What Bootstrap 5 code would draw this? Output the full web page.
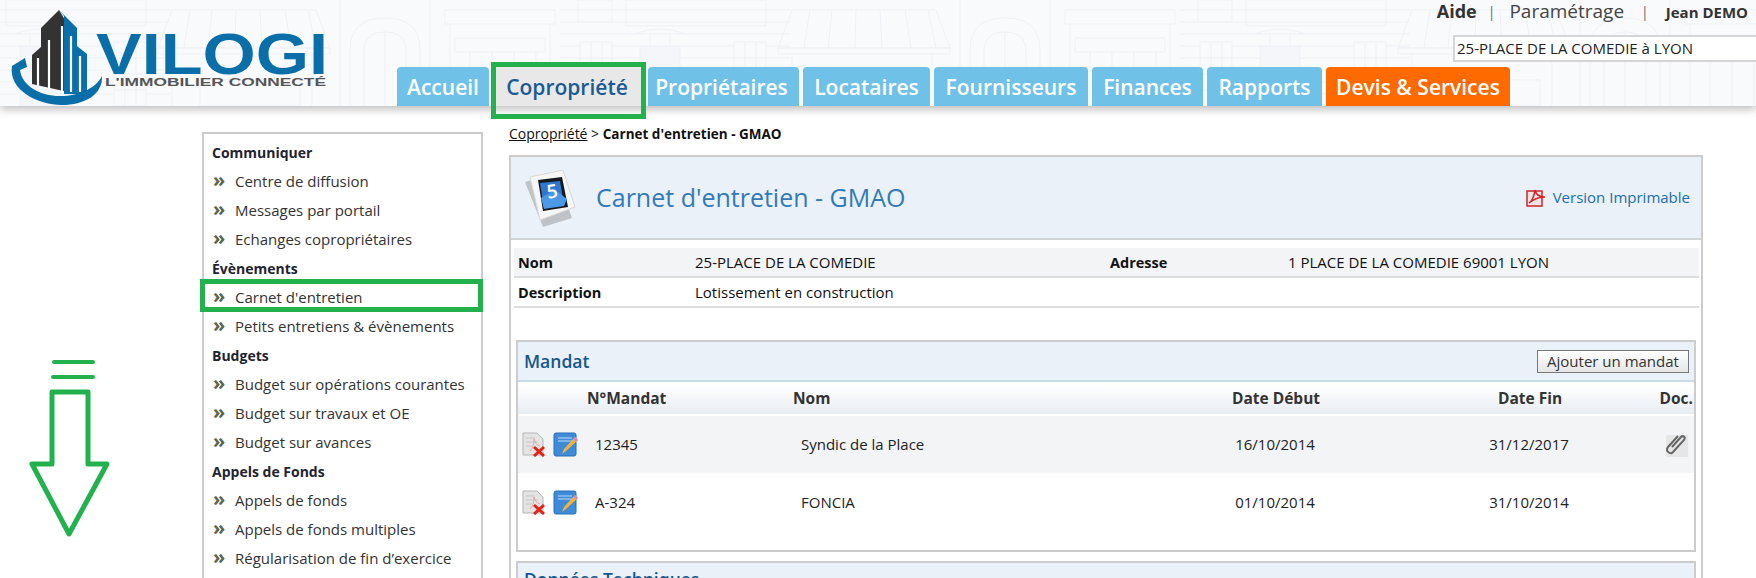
<!DOCTYPE html>
<html lang="fr">
<head>
<meta charset="utf-8">
<title>Carnet d'entretien - GMAO</title>
<link href="https://cdn.jsdelivr.net/npm/bootstrap@5.3.0/dist/css/bootstrap.min.css" rel="stylesheet">
<style>
html,body{height:578px;overflow:hidden;background:#fff}
body{font-family:"Open Sans","Noto Sans",sans-serif;font-size:15px;color:#222}
.vg-top{height:106px;background:#f9fafc;box-shadow:0 3px 9px rgba(0,0,0,.28);position:relative;z-index:2}
.vg-facade{position:absolute;inset:0;width:100%;height:100%}
.vg-logo{width:397px;height:106px;flex:0 0 397px;position:relative}
.vg-right{position:relative;min-width:0}
.vg-util{height:67px}
.vg-links{height:35px;color:#444;font-size:18px;line-height:23px;padding-right:8px}
.vg-links b{color:#333}
.vg-links .vg-sep{font-size:14px;color:#666}
.vg-para{font-size:19px;margin:0 17px 0 14px}
.vg-gap1{margin-left:11px}
.vg-user{font-size:15px;font-weight:700;color:#333;position:relative;top:1px;margin-left:17px}
.vg-select{width:310px;height:27px;margin-right:-7px;margin-left:auto;background:#fff;border:2px solid #d6d6d6;padding:0 2px;line-height:22px;font-size:15px;color:#222}
.vg-tabs{gap:4px;height:39px;flex-wrap:nowrap}
.vg-tabs .nav-link{height:39px;background:#70c1e8;color:#fff;font-size:21px;font-weight:600;line-height:41px;padding:0;text-align:center;border-radius:4px 4px 0 0;white-space:nowrap}
.vg-tabs .vg-w1{width:92px}.vg-tabs .vg-w2{width:151px;padding-right:3px}.vg-tabs .vg-w3{width:151px;padding-right:4px}.vg-tabs .vg-w4{width:127px}
.vg-tabs .vg-w5{width:154px}.vg-tabs .vg-w6{width:111px}.vg-tabs .vg-w7{width:115px}.vg-tabs .vg-w8{width:184px}
.vg-tabs .nav-link.active{background:#e8e8e8;color:#1b5a92;position:relative}
.vg-tabs .nav-link.active::after{content:"";position:absolute;left:-2px;right:-2px;top:-5px;bottom:-13px;border:5px solid #22b14c;pointer-events:none}
.vg-tabs .nav-link.vg-orange{background:#ff6a00}
.vg-page{padding-left:202px;gap:26px}
.vg-side{width:281px;flex:0 0 281px;height:460px;margin-top:26px;border:2px solid #ccc;border-bottom:0;padding:4px 8px 0 8px;background:#fff}
.vg-side h6{font-size:14px;font-weight:700;line-height:29px;height:29px;margin:0;color:#1f2430}
.vg-side ul{margin:0}
.vg-side li{height:29px;line-height:29px;position:relative;color:#333;white-space:nowrap;display:flex;align-items:center;padding-left:2px}
.vg-side li i{font-style:normal;font-weight:700;font-size:20px;color:#59654d;width:21px;flex:0 0 21px;position:relative;top:-2px;left:-1px}
.vg-marked::after{content:"";position:absolute;left:-12px;right:-10px;top:-4px;bottom:0;border:5px solid #22b14c;pointer-events:none}
.vg-main{width:1194px;flex:0 0 1194px;margin-top:18px}
.vg-crumb{height:31px;line-height:20px;font-size:14px;color:#111}
.vg-crumb a{color:#111}
.vg-crumb b{font-size:13.5px}
.vg-panel{border:2px solid #ccc;border-bottom:0;height:460px}
.vg-head{height:83px;background:#eaf1f8;border-bottom:2px solid #d2d5d8;padding-left:9px;padding-right:11px}
.vg-head h1{font-size:25px;font-weight:400;color:#337ab7;margin:0 0 0 11px;line-height:1;position:relative;top:0}
.vg-print{color:#1a6fa8;font-size:15px;text-decoration:none;gap:7px}
.vg-body{padding:8px 2px 0 3px}
.vg-info{table-layout:fixed;margin-bottom:32px;width:1185px}
.vg-info td,.vg-info th{padding:0 0 0 4px;height:29px;vertical-align:middle;border-bottom:2px solid #ddd;background:transparent;box-shadow:none;font-size:15px;color:#111}
.vg-info th{font-weight:700;font-size:14.5px;padding-top:1px}
.vg-info tr.vg-odd td,.vg-info tr.vg-odd th{background:#f3f4f6}
.vg-info tr.vg-even td,.vg-info tr.vg-even th{height:30px}
.vg-c1{width:177px}.vg-c2{width:415px}.vg-c3{width:178px}
.vg-sub{width:1180px;margin-left:2px;border:2px solid #ccc;margin-bottom:9px}
.vg-subhead{height:40px;background:#eaf1f8;border-bottom:2px solid #c9dde9;padding:0 5px 0 6px}
.vg-subhead h2{font-size:17.5px;font-weight:600;color:#15568f;margin:0}
.vg-cuthead{padding-bottom:6px}
.vg-add{height:23px;width:152px;padding:0;font-size:15px;line-height:20px;color:#333;background:linear-gradient(#fff,#e6e6e6);border:1px solid #777;border-radius:0}
.vg-grid{table-layout:fixed;margin:0;width:1176px}
.vg-grid th{height:33px;padding:1px 0 0;font-size:15.5px;font-weight:700;color:#333;vertical-align:middle;background:linear-gradient(#fff 0,#fff 10%,#e7ecf2 100%);border-bottom:2px solid #fff;box-shadow:none;line-height:1}
.vg-grid thead{border-bottom:2px solid #d3e0ea}
.vg-grid td{height:58px;padding:0;vertical-align:middle;font-size:15px;color:#222;border:0;background:transparent;box-shadow:none}
.vg-grid tr.vg-odd td{background:#f3f4f6}
.vg-g1{width:69px}.vg-g2{width:206px}.vg-g3{width:307px}.vg-g4{width:352px}.vg-g5{width:156px}
.vg-pad{padding-left:8px!important}
.vg-tools{padding-left:4px!important}
.vg-tools svg{display:inline-block;vertical-align:middle}
.vg-tools svg+svg{margin-left:7px}
.vg-gridfoot{height:19px}
.vg-rdoc{text-align:right;padding-right:1px!important}
.vg-rclip{text-align:right;padding-right:6px!important}
.vg-mid{text-align:center}
.vg-dates{padding-right:2px!important}
.vg-arrow{position:absolute;left:28px;top:358px;z-index:3;pointer-events:none}
</style>
</head>
<body>
<header class="vg-top d-flex">
  <svg class="vg-facade" viewBox="0 0 1756 106" preserveAspectRatio="none" aria-hidden="true">
    <defs>
      <pattern id="vgFacade" x="-60" y="0" width="620" height="106" patternUnits="userSpaceOnUse">
        <g fill="none" stroke="#eff1f6" stroke-width="1">
          <path d="M0 10H230M0 22H230M0 34H230M0 46H230M0 58H230M0 70H230M0 82H230M0 94H230"/>
          <path d="M18 0h34v22H18zM66 0h140v26H66z"/>
          <rect x="20" y="42" width="32" height="64" fill="#f9fafc"/><path d="M31 42v64M42 42v64M20 58h32M20 74h32M20 90h32"/>
          <rect x="80" y="46" width="40" height="60" fill="#f4f6f9"/><path d="M74 34q26-10 52 0M90 34v12M110 34v12"/>
          <rect x="174" y="42" width="32" height="64" fill="#f9fafc"/><path d="M185 42v64M196 42v64M174 58h32M174 74h32M174 90h32"/>
          <path d="M232 10l-14 38h172l-14-38zM250 10l-6 38M272 10l-4 38M296 10l-1 38M320 10l2 38M345 10l6 38M368 10l8 38"/>
          <path d="M218 48h172v6H218zM232 54v52M372 54v52M260 80h100v26H260z"/>
          <path d="M410 106V50q0-32 35-32t35 32v56M424 106V52q0-20 21-20t21 20v54M445 32v74M400 0v106M490 0v106"/>
          <path d="M505 10h110v14H505zM510 24v82M610 24v82M515 38h90v14h-90zM530 52v54M552 52v54M574 52v54M596 52v54"/>
        </g>
      </pattern>
    </defs>
    <rect width="1756" height="106" fill="url(#vgFacade)"/>
  </svg>
  <div class="vg-logo">
    <svg width="397" height="106" viewBox="0 0 397 106" role="img" aria-label="Vilogi">
      <path d="M25 58L12 66C8 90 38 105 62 105C84 105 103 95 102 76C96 88 80 96 60 96C40 96 22 86 20 70L27 67Z" fill="#0a6fa9"/>
      <path d="M59 10L41 28V47L32 55V84L68 92V25Z" fill="#333"/>
      <path d="M59 10L77 28V46L87 54V94L64 94V16Z" fill="#0a6fa9"/>
      <path d="M38 58V86M49 40V90M62 26V92M71 36V92M80 56V92" stroke="#fff" stroke-width="2.2" fill="none"/>
      <text x="96" y="74" font-family="'Liberation Sans',sans-serif" font-weight="700" font-size="58" fill="#0a6fa9" textLength="232" lengthAdjust="spacingAndGlyphs">VILOGI</text>
      <text x="105" y="86" font-family="'Liberation Sans',sans-serif" font-weight="700" font-size="11.5" fill="#555" textLength="221" lengthAdjust="spacingAndGlyphs">L'IMMOBILIER CONNECTÉ</text>
    </svg>
  </div>
  <div class="vg-right flex-grow-1 d-flex flex-column">
    <div class="vg-util">
      <div class="vg-links d-flex justify-content-end align-items-start">
        <b>Aide</b><span class="vg-sep vg-gap1">|</span><span class="vg-para">Paramétrage</span><span class="vg-sep">|</span><span class="vg-user">Jean DEMO</span>
      </div>
      <div class="vg-select">25-PLACE DE LA COMEDIE à LYON</div>
    </div>
    <ul class="nav vg-tabs">
      <li class="nav-item"><a class="nav-link vg-w1" href="#">Accueil</a></li>
      <li class="nav-item"><a class="nav-link active vg-w2" href="#">Copropriété</a></li>
      <li class="nav-item"><a class="nav-link vg-w3" href="#">Propriétaires</a></li>
      <li class="nav-item"><a class="nav-link vg-w4" href="#">Locataires</a></li>
      <li class="nav-item"><a class="nav-link vg-w5" href="#">Fournisseurs</a></li>
      <li class="nav-item"><a class="nav-link vg-w6" href="#">Finances</a></li>
      <li class="nav-item"><a class="nav-link vg-w7" href="#">Rapports</a></li>
      <li class="nav-item"><a class="nav-link vg-orange vg-w8" href="#">Devis &amp; Services</a></li>
    </ul>
  </div>
</header>

<svg class="vg-arrow" width="84" height="182" viewBox="0 0 84 182" aria-hidden="true">
  <g fill="none" stroke="#22b14c" stroke-width="4" stroke-linecap="round"><path d="M26 4H65M25 19H65"/></g>
  <path d="M24 34H60V106H79L41 176L4 106H24Z" fill="none" stroke="#22b14c" stroke-width="5" stroke-linejoin="round"/>
</svg>

<div class="vg-page d-flex">
  <nav class="vg-side">
    <h6>Communiquer</h6>
    <ul class="list-unstyled">
      <li><i>»</i>Centre de diffusion</li>
      <li><i>»</i>Messages par portail</li>
      <li><i>»</i>Echanges copropriétaires</li>
    </ul>
    <h6>Évènements</h6>
    <ul class="list-unstyled">
      <li class="vg-marked"><i>»</i>Carnet d'entretien</li>
      <li><i>»</i>Petits entretiens &amp; évènements</li>
    </ul>
    <h6>Budgets</h6>
    <ul class="list-unstyled">
      <li><i>»</i>Budget sur opérations courantes</li>
      <li><i>»</i>Budget sur travaux et OE</li>
      <li><i>»</i>Budget sur avances</li>
    </ul>
    <h6>Appels de Fonds</h6>
    <ul class="list-unstyled">
      <li><i>»</i>Appels de fonds</li>
      <li><i>»</i>Appels de fonds multiples</li>
      <li><i>»</i>Régularisation de fin d’exercice</li>
    </ul>
  </nav>

  <main class="vg-main">
    <div class="vg-crumb"><a href="#">Copropriété</a> &gt; <b>Carnet d'entretien - GMAO</b></div>
    <section class="vg-panel">
      <div class="vg-head d-flex align-items-center">
        <svg width="65" height="65" viewBox="0 0 65 65" aria-hidden="true">
          <path d="M5 17l30-9 17 45-29 9z" fill="#bfc2c6"/>
          <path d="M10 12l33-7 12 37-35 13z" fill="#f6f6f6" stroke="#d8d8d8"/>
          <path d="M18 15l24-3 6 30-25 4z" fill="#15181c"/>
          <path d="M20 18l20-2 4 24-20 3z" fill="#2f78cd"/>
          <path d="M21 33l14-8 12 9-3 7-20 3z" fill="#4b98e6"/>
          <text x="27" y="33" font-family="'Open Sans',sans-serif" font-size="19" font-weight="600" fill="#fff" transform="rotate(-8 32 28)">5</text>
        </svg>
        <h1>Carnet d'entretien - GMAO</h1>
        <a class="vg-print ms-auto d-flex align-items-center" href="#">
          <svg width="20" height="19" viewBox="0 0 20 19" aria-hidden="true">
            <rect x="1" y="3" width="15" height="15" fill="#f1e4e4" stroke="#c8262c" stroke-width="1.5"/>
            <path d="M3 15c3-2 5-6 6-13 1 5 4 7 10 7-6 0-11 2-16 6z" fill="none" stroke="#d4222a" stroke-width="1.5"/>
          </svg>
          <span>Version Imprimable</span>
        </a>
      </div>
      <div class="vg-body">
        <table class="table vg-info">
          <colgroup><col class="vg-c1"><col class="vg-c2"><col class="vg-c3"><col></colgroup>
          <tbody>
            <tr class="vg-odd"><th scope="row">Nom</th><td>25-PLACE DE LA COMEDIE</td><th scope="row">Adresse</th><td>1 PLACE DE LA COMEDIE 69001 LYON</td></tr>
            <tr class="vg-even"><th scope="row">Description</th><td>Lotissement en construction</td><td></td><td></td></tr>
          </tbody>
        </table>

        <section class="vg-sub">
          <div class="vg-subhead d-flex align-items-center justify-content-between">
            <h2>Mandat</h2>
            <button class="btn vg-add" type="button">Ajouter un mandat</button>
          </div>
          <table class="table vg-grid">
            <colgroup><col class="vg-g1"><col class="vg-g2"><col class="vg-g3"><col class="vg-g4"><col class="vg-g5"><col></colgroup>
            <thead><tr><th></th><th>N°Mandat</th><th>Nom</th><th class="vg-mid">Date Début</th><th class="vg-mid">Date Fin</th><th class="vg-rdoc">Doc.</th></tr></thead>
            <tbody>
              <tr class="vg-odd">
                <td class="vg-tools">
                  <svg width="24" height="25" viewBox="0 0 24 25" aria-hidden="true"><path d="M1 1h14l6 6v16H1z" fill="#e4e4e4" stroke="#b5b5b5"/><path d="M4 6h9M4 10h12M4 14h6" stroke="#c6c6c6"/><path d="M8 19c3-3 4-7 4-12 1 4 3 6 6 7" fill="none" stroke="#e5a5a5"/><path d="M12 15l10 9M22 15l-10 9" stroke="#e2231a" stroke-width="3"/></svg><svg width="26" height="25" viewBox="0 0 26 25" aria-hidden="true"><rect x="1" y="1" width="22" height="23" rx="2" fill="#3d8bd9" stroke="#2a6fb8"/><path d="M5 6h14M5 9h14" stroke="#bcdcf7"/><path d="M9 22l2-5 11-12 3 3-12 11z" fill="#f2b33a"/><path d="M22 5l3 3-2 2-3-3z" fill="#cf8fb8"/></svg>
                </td>
                <td class="vg-pad">12345</td><td class="vg-pad">Syndic de la Place</td><td class="vg-mid vg-dates">16/10/2014</td><td class="vg-mid vg-dates">31/12/2017</td>
                <td class="vg-rclip">
                  <svg width="26" height="25" viewBox="0 0 26 25" aria-hidden="true"><rect x="4" y="3" width="22" height="22" fill="#e6e6e6"/><path d="M10 15l9-10c2-2 5 0 3 3L11 20c-3 3-8-1-5-5L16 4" fill="none" stroke="#666" stroke-width="2"/></svg>
                </td>
              </tr>
              <tr>
                <td class="vg-tools">
                  <svg width="24" height="25" viewBox="0 0 24 25" aria-hidden="true"><path d="M1 1h14l6 6v16H1z" fill="#e4e4e4" stroke="#b5b5b5"/><path d="M4 6h9M4 10h12M4 14h6" stroke="#c6c6c6"/><path d="M8 19c3-3 4-7 4-12 1 4 3 6 6 7" fill="none" stroke="#e5a5a5"/><path d="M12 15l10 9M22 15l-10 9" stroke="#e2231a" stroke-width="3"/></svg><svg width="26" height="25" viewBox="0 0 26 25" aria-hidden="true"><rect x="1" y="1" width="22" height="23" rx="2" fill="#3d8bd9" stroke="#2a6fb8"/><path d="M5 6h14M5 9h14" stroke="#bcdcf7"/><path d="M9 22l2-5 11-12 3 3-12 11z" fill="#f2b33a"/><path d="M22 5l3 3-2 2-3-3z" fill="#cf8fb8"/></svg>
                </td>
                <td class="vg-pad">A-324</td><td class="vg-pad">FONCIA</td><td class="vg-mid vg-dates">01/10/2014</td><td class="vg-mid vg-dates">31/10/2014</td><td></td>
              </tr>
            </tbody>
          </table>
          <div class="vg-gridfoot"></div>
        </section>

        <section class="vg-sub">
          <div class="vg-subhead vg-cuthead d-flex align-items-center"><h2>Données Techniques</h2></div>
        </section>
      </div>
    </section>
  </main>
</div>
</body>
</html>
